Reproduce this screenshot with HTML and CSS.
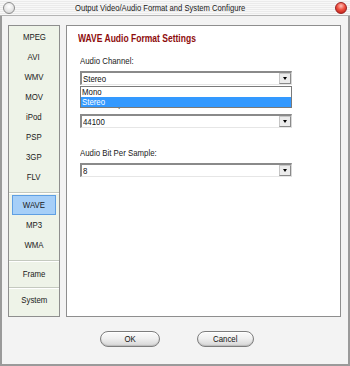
FILE: index.html
```html
<!DOCTYPE html>
<html>
<head>
<meta charset="utf-8">
<link rel="stylesheet" href="styles.css">
</head>
<body>
<div class="window">
  <div class="titlebar">
    <span class="tb-btn tb-min"></span>
    <span class="title"><span class="t">Output Video/Audio Format and System Configure</span></span>
    <span class="tb-btn tb-close"></span>
  </div>
  <div class="body">
    <div class="main">
      <nav class="sidebar">
        <div class="group g1">
          <div class="item"><span class="t c">MPEG</span></div>
          <div class="item"><span class="t c">AVI</span></div>
          <div class="item"><span class="t c">WMV</span></div>
          <div class="item"><span class="t c">MOV</span></div>
          <div class="item"><span class="t c">iPod</span></div>
          <div class="item"><span class="t c">PSP</span></div>
          <div class="item"><span class="t c">3GP</span></div>
          <div class="item"><span class="t c">FLV</span></div>
        </div>
        <div class="group g2">
          <div class="item selected"><span class="t c">WAVE</span></div>
          <div class="item"><span class="t c">MP3</span></div>
          <div class="item"><span class="t c">WMA</span></div>
        </div>
        <div class="group g3">
          <div class="item"><span class="t c">Frame</span></div>
        </div>
        <div class="group g4">
          <div class="item"><span class="t c">System</span></div>
        </div>
      </nav>
      <section class="panel">
        <h1 class="heading"><span class="t">WAVE Audio Format Settings</span></h1>
        <div class="field f1">
          <div class="label"><span class="t">Audio Channel:</span></div>
          <div class="select-wrap">
            <div class="select"><span class="value"><span class="t">Stereo</span></span><span class="arrow"></span></div>
            <ul class="dropdown">
              <li class="opt"><span class="t">Mono</span></li>
              <li class="opt hl"><span class="t">Stereo</span></li>
            </ul>
          </div>
        </div>
        <div class="field f2">
          <div class="label"><span class="t">Audio Sample Rate:</span></div>
          <div class="select"><span class="value"><span class="t">44100</span></span><span class="arrow"></span></div>
        </div>
        <div class="field f3">
          <div class="label"><span class="t">Audio Bit Per Sample:</span></div>
          <div class="select"><span class="value"><span class="t">8</span></span><span class="arrow"></span></div>
        </div>
      </section>
    </div>
    <div class="buttons">
      <button class="btn ok"><span class="t c">OK</span></button>
      <button class="btn cancel"><span class="t c">Cancel</span></button>
    </div>
  </div>
</div>
</body>
</html>
```

FILE: styles.css
```css
* { box-sizing: border-box; }
html, body {
  margin: 0;
  padding: 0;
  background: #f2f2f2;
}
body {
  width: 350px;
  height: 366px;
  overflow: hidden;
  font-family: "Liberation Sans", Arial, sans-serif;
  font-size: 9.8px;
  color: #111;
}
.t {
  display: inline-block;
  transform: scaleX(0.8);
  transform-origin: left center;
  white-space: nowrap;
}
.t.c { transform-origin: center center; }
.window {
  width: 350px;
  height: 366px;
  border-left: 2px solid #9a9a9a;
  border-right: 2px solid #9a9a9a;
  border-bottom: 2px solid #9a9a9a;
  background: #f3f3f3;
  display: flex;
  flex-direction: column;
}
.titlebar {
  height: 16px;
  display: flex;
  align-items: center;
  justify-content: space-between;
  background: repeating-linear-gradient(180deg, #f8f8f8 0px, #f8f8f8 1px, #ebebeb 1px, #ebebeb 2px);
  border-bottom: 1px solid #b4b4b4;
  margin: 0 -2px;
  padding: 0 3px;
}
.title {
  font-size: 9.8px;
  color: #222;
  flex: 1;
  text-align: left;
  padding-left: 60px;
  line-height: 12px;
  overflow: hidden;
}
.title .t { transform: scaleX(0.78); }
.tb-btn {
  width: 12px;
  height: 12px;
  border-radius: 50%;
  flex: none;
}
.tb-min {
  border: 1px solid #8c8c8c;
  background: radial-gradient(circle at 50% 35%, #ffffff 0, #e4e4e4 60%, #c8c8c8 100%);
}
.tb-close {
  border: 1px solid #9a2020;
  background: radial-gradient(circle at 50% 30%, #ffc0b8 0, #f05040 45%, #b01810 100%);
}
.body {
  flex: 1;
  display: flex;
  flex-direction: column;
  padding: 9px 6px 0 6px;
}
.main {
  display: flex;
  gap: 6px;
  height: 292px;
}
.sidebar {
  width: 52px;
  background: #eef3e8;
  border: 1px solid #8e8e8e;
  display: flex;
  flex-direction: column;
}
.group {
  border-bottom: 1px solid #c4c9bf;
  box-shadow: 0 1px 0 #ffffff;
}
.g1 { padding: 1px 3px 5px; }
.g2 { padding: 2px 3px 5px; }
.g3 { padding: 3px 3px 3px; }
.g4 { padding: 2px 3px; border-bottom: none; box-shadow: none; flex: 1; }
.item {
  height: 20px;
  line-height: 20px;
  text-align: center;
  color: #1a1a1a;
}
.item.selected {
  background: #a6cff8;
  border: 1px solid #5f9fe3;
  line-height: 18px;
  height: 20px;
}
.panel {
  width: 275px;
  background: #ffffff;
  border: 1px solid #8e8e8e;
  padding: 7px 0 0 11px;
}
.heading {
  margin: 0;
  font-weight: bold;
  font-size: 10.4px;
  line-height: 12px;
  color: #8e0c0c;
}
.heading .t { transform: scaleX(0.82); }
.field { margin-left: 2px; width: 212px; }
.f1 { margin-top: 10px; }
.f2 { margin-top: 13px; }
.f3 { margin-top: 19px; }
.label {
  height: 12px;
  line-height: 12px;
  margin-bottom: 4px;
  color: #222;
}
.select-wrap { position: relative; }
.select {
  height: 14px;
  width: 212px;
  background: #fff;
  border-top: 2px solid #8a8a8a;
  border-left: 2px solid #8a8a8a;
  border-right: 1px solid #d8d8d8;
  border-bottom: 1px solid #e6e6e6;
  display: flex;
  align-items: center;
  padding-left: 1px;
}
.value { flex: 1; line-height: 11px; }
.arrow {
  width: 12px;
  height: 11px;
  background: #ececec;
  border: 1px solid #c6c6c6;
  border-right-color: #8a8a8a;
  border-bottom-color: #8a8a8a;
  position: relative;
}
.arrow::after {
  content: "";
  position: absolute;
  left: 3px;
  top: 3px;
  border-left: 2.5px solid transparent;
  border-right: 2.5px solid transparent;
  border-top: 3px solid #000;
}
.dropdown {
  position: absolute;
  left: 0;
  top: 15px;
  width: 212px;
  margin: 0;
  padding: 0;
  list-style: none;
  background: #fff;
  border: 1px solid #7a7a7a;
  z-index: 2;
}
.opt {
  height: 10px;
  line-height: 10px;
  padding-left: 1px;
}
.opt.hl {
  background: #3399ff;
  color: #fff;
}
.buttons {
  display: flex;
  gap: 37px;
  padding: 14px 0 0 92px;
}
.btn {
  height: 16px;
  padding: 0;
  font-family: "Liberation Sans", Arial, sans-serif;
  font-size: 9.8px;
  line-height: 14px;
  color: #111;
  border: 1px solid #7d7d7d;
  border-radius: 8px;
  background: linear-gradient(180deg, #fbfbfb 0%, #f0f0f0 45%, #d6d6d6 100%);
  box-shadow: inset 0 -1px 1px #bdbdbd, inset 0 1px 0 #ffffff;
}
.ok { width: 60px; }
.cancel { width: 57px; }
```
